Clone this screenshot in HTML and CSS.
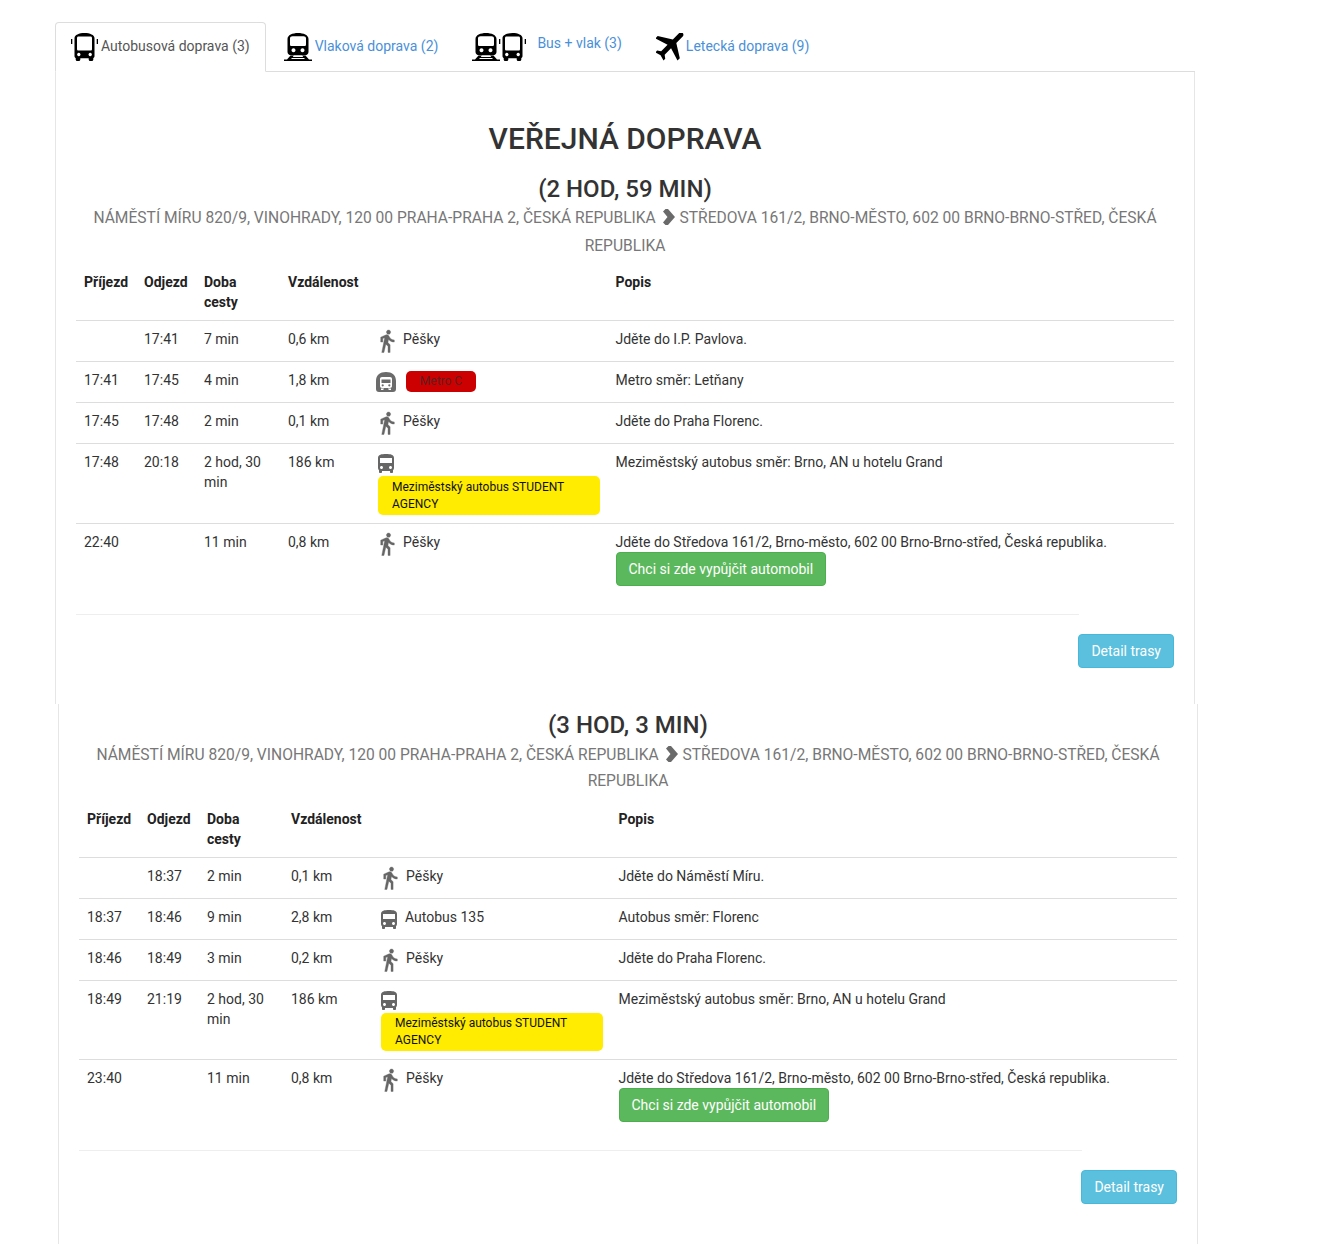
FILE: index.html
```html
<!DOCTYPE html>
<html lang="cs">
<head>
<meta charset="utf-8">
<title>Veřejná doprava</title>
<link rel="stylesheet" href="styles.css">
</head>
<body>
<svg class="defs" width="0" height="0" aria-hidden="true">
  <symbol id="walk" viewBox="5.500 .5 14 23"><path stroke-width=".35" d="M13.5 5.500c1.100 0 2-.9 2-2s-.9-2-2-2-2 .9-2 2 .9 2 2 2zM9.800 8.900L7 23h2.100l1.800-8 2.100 2v6h2v-7.500l-2.100-2 .6-3C14.800 12 16.800 13 19 13v-2c-1.900 0-3.500-1-4.300-2.400l-1-1.600c-.4-.6-1-1-1.700-1-.3 0-.5.1-.8.1L6 8.300V13h2V9.600l1.800-.7"/></symbol>
  <symbol id="bus" viewBox="4 2 16 19"><path d="M4 16c0 .88.39 1.67 1 2.220V20c0 .55.45 1 1 1h1c.55 0 1-.45 1-1v-1h8v1c0 .55.45 1 1 1h1c.55 0 1-.45 1-1v-1.780c.61-.55 1-1.340 1-2.220V6c0-3.500-3.580-4-8-4s-8 .5-8 4v10zm3.500 1c-.83 0-1.500-.67-1.500-1.500S6.670 14 7.500 14s1.500.67 1.500 1.500S8.330 17 7.500 17zm9 0c-.83 0-1.500-.67-1.500-1.500s.67-1.500 1.500-1.500 1.500.67 1.500 1.500-.67 1.500-1.500 1.500zm1.500-6H6V6h12v5z"/></symbol>
  <symbol id="metro" viewBox="0 0 20 20"><path fill-rule="evenodd" d="M3 20a3 3 0 0 1-3-3V9C0 3 4 0 10 0s10 3 10 9v8a3 3 0 0 1-3 3zM6 5C4.800 5 4 5.800 4 7v7c0 1.200.8 2 2 2h8c1.200 0 2-.8 2-2V7c0-1.200-.8-2-2-2zM5.500 7.500h9V11h-9zM6.700 12.200a1.100 1.100 0 1 0 .01 0zM13.300 12.200a1.100 1.100 0 1 0 .01 0zM5 16.500h3l-.8 1.500H5zM12 16.500h3V18h-2.200z"/></symbol>
  <symbol id="tabbus" viewBox="0 0 27 28"><path fill-rule="evenodd" d="M3.500 5c0-3 4.500-5 10-5s10 2 10 5v18c0 1-.5 1.700-1.200 2v1.500c0 .9-.6 1.500-1.500 1.500h-1.600c-.9 0-1.500-.6-1.500-1.500V25.300H9.300v1.200c0 .9-.6 1.500-1.500 1.500H6.200c-.9 0-1.500-.6-1.500-1.500V25C4 24.700 3.500 24 3.500 23zM7.500 3.500c-1 0-1.500.6-1.500 1.500v11c0 1 .5 1.500 1.500 1.500h12c1 0 1.500-.5 1.500-1.500V5c0-.9-.5-1.500-1.500-1.500zM7.800 19.800a1.700 1.700 0 1 0 .01 0zM19.200 19.800a1.700 1.700 0 1 0 .01 0z"/><path d="M0 6h1.300v5H0zM25.700 6H27v5h-1.300z"/></symbol>
  <symbol id="train" viewBox="0 0 28 28"><path fill-rule="evenodd" d="M3.500 6c0-4 5-6 10.500-6s10.500 2 10.500 6v13c0 1.800-1.500 3.200-3.500 3.200H7c-2 0-3.500-1.400-3.500-3.200zM8.500 3.200c-1.500 0-2.500.7-2.500 2v6.300c0 1 .7 1.500 1.500 1.500h13c.8 0 1.500-.5 1.500-1.500V5.200c0-1.300-1-2-2.500-2zM9.500 15.300a2 2 0 1 0 .01 0zM18.500 15.300a2 2 0 1 0 .01 0z"/><path d="M6.500 22.500h3.300L8.800 24h10.400l-1-1.500h3.300L25 26.500h3V28H0v-1.500h3zM7.800 25l-.6 1h13.600l-.6-1z"/></symbol>
  <symbol id="plane" viewBox="2.500 4.500 17 17"><path transform="rotate(45 12 12)" d="M21 16v-2l-8-5V3.500c0-.83-.67-1.500-1.500-1.500S10 2.670 10 3.500V9l-8 5v2l8-2.500V19l-2 1.500V22l3.500-1 3.500 1v-1.500L13 19v-5.500l8 2.500z"/></symbol>
</svg>

<nav class="tabs">
  <a class="tab tab-active"><svg class="ti ti-bus"><use href="#tabbus"/></svg><span class="tab-label">Autobusová doprava (3)</span></a>
  <a class="tab"><svg class="ti ti-train"><use href="#train"/></svg><span class="tab-label">Vlaková doprava (2)</span></a>
  <a class="tab"><svg class="ti ti-train ti-tight"><use href="#train"/></svg><svg class="ti ti-bus ti-tail"><use href="#tabbus"/></svg><span class="tab-label raised">Bus + vlak (3)</span></a>
  <a class="tab"><svg class="ti ti-plane"><use href="#plane"/></svg><span class="tab-label">Letecká doprava (9)</span></a>
</nav>

<section class="panel panel-first">
  <h2 class="title">VEŘEJNÁ DOPRAVA</h2>
  <h3 class="duration">(2 HOD, 59 MIN)</h3>
  <p class="route route-first">NÁMĚSTÍ MÍRU 820/9, VINOHRADY, 120 00 PRAHA-PRAHA 2, ČESKÁ REPUBLIKA <svg class="chev" viewBox="0 0 12 16"><path d="M2.500 0H5l7 8-7 8H2.500L0 13.500 4.500 8 0 2.500z"/></svg> STŘEDOVA 161/2, BRNO-MĚSTO, 602 00 BRNO-BRNO-STŘED, ČESKÁ REPUBLIKA</p>
  <table class="plan">
    <colgroup><col class="c1"><col class="c2"><col class="c3"><col class="c4"><col class="c5"><col></colgroup>
    <thead><tr><th>Příjezd</th><th>Odjezd</th><th>Doba cesty</th><th>Vzdálenost</th><th></th><th>Popis</th></tr></thead>
    <tbody>
      <tr><td></td><td>17:41</td><td>7 min</td><td>0,6 km</td><td><svg class="walk"><use href="#walk"/></svg>Pěšky</td><td>Jděte do I.P. Pavlova.</td></tr>
      <tr><td>17:41</td><td>17:45</td><td>4 min</td><td>1,8 km</td><td><svg class="metro"><use href="#metro"/></svg><span class="badge badge-metro">Metro C</span></td><td>Metro směr: Letňany</td></tr>
      <tr><td>17:45</td><td>17:48</td><td>2 min</td><td>0,1 km</td><td><svg class="walk"><use href="#walk"/></svg>Pěšky</td><td>Jděte do Praha Florenc.</td></tr>
      <tr><td>17:48</td><td>20:18</td><td>2 hod, 30 min</td><td>186 km</td><td><svg class="bus bus-block"><use href="#bus"/></svg><span class="badge badge-coach">Meziměstský autobus STUDENT AGENCY</span></td><td>Meziměstský autobus směr: Brno, AN u hotelu Grand</td></tr>
      <tr><td>22:40</td><td></td><td>11 min</td><td>0,8 km</td><td><svg class="walk"><use href="#walk"/></svg>Pěšky</td><td>Jděte do Středova 161/2, Brno-město, 602 00 Brno-Brno-střed, Česká republika.<br><a class="btn btn-green">Chci si zde vypůjčit automobil</a></td></tr>
    </tbody>
  </table>
  <div class="foot"><hr class="rule"></div>
  <div class="actions"><a class="btn btn-blue">Detail trasy</a></div>
</section>

<section class="panel panel-second">
  <h3 class="duration duration-top">(3 HOD, 3 MIN)</h3>
  <p class="route">NÁMĚSTÍ MÍRU 820/9, VINOHRADY, 120 00 PRAHA-PRAHA 2, ČESKÁ REPUBLIKA <svg class="chev" viewBox="0 0 12 16"><path d="M2.500 0H5l7 8-7 8H2.500L0 13.500 4.500 8 0 2.500z"/></svg> STŘEDOVA 161/2, BRNO-MĚSTO, 602 00 BRNO-BRNO-STŘED, ČESKÁ REPUBLIKA</p>
  <table class="plan plan-second">
    <colgroup><col class="c1"><col class="c2"><col class="c3"><col class="c4"><col class="c5"><col></colgroup>
    <thead><tr><th>Příjezd</th><th>Odjezd</th><th>Doba cesty</th><th>Vzdálenost</th><th></th><th>Popis</th></tr></thead>
    <tbody>
      <tr><td></td><td>18:37</td><td>2 min</td><td>0,1 km</td><td><svg class="walk"><use href="#walk"/></svg>Pěšky</td><td>Jděte do Náměstí Míru.</td></tr>
      <tr><td>18:37</td><td>18:46</td><td>9 min</td><td>2,8 km</td><td><svg class="bus"><use href="#bus"/></svg>Autobus 135</td><td>Autobus směr: Florenc</td></tr>
      <tr><td>18:46</td><td>18:49</td><td>3 min</td><td>0,2 km</td><td><svg class="walk"><use href="#walk"/></svg>Pěšky</td><td>Jděte do Praha Florenc.</td></tr>
      <tr><td>18:49</td><td>21:19</td><td>2 hod, 30 min</td><td>186 km</td><td><svg class="bus bus-block"><use href="#bus"/></svg><span class="badge badge-coach">Meziměstský autobus STUDENT AGENCY</span></td><td>Meziměstský autobus směr: Brno, AN u hotelu Grand</td></tr>
      <tr><td>23:40</td><td></td><td>11 min</td><td>0,8 km</td><td><svg class="walk"><use href="#walk"/></svg>Pěšky</td><td>Jděte do Středova 161/2, Brno-město, 602 00 Brno-Brno-střed, Česká republika.<br><a class="btn btn-green">Chci si zde vypůjčit automobil</a></td></tr>
    </tbody>
  </table>
  <div class="foot"><hr class="rule"></div>
  <div class="actions"><a class="btn btn-blue">Detail trasy</a></div>
</section>
</body>
</html>
```
FILE: styles.css
```css
* { box-sizing: border-box; }
html, body { margin: 0; padding: 0; }
body {
  background: #fff;
  color: #333;
  font-family: Roboto, "Liberation Sans", sans-serif;
  font-size: 14px;
  line-height: 20px;
  overflow: hidden;
  height: 1244px;
}
.defs { position: absolute; }

.tabs {
  display: flex;
  width: 1140px;
  height: 50px;
  margin: 22px 0 0 55px;
  border-bottom: 1px solid #ddd;
}
.tab {
  display: flex;
  align-items: center;
  height: 50px;
  margin-right: 2px;
  padding: 0 15px;
  border: 1px solid transparent;
  border-radius: 4px 4px 0 0;
  color: #4a90d9;
}
.tab-active {
  color: #555;
  background: #fff;
  border-color: #ddd #ddd #fff;
}
.tab-label { position: relative; top: -1px; }
.raised { top: -4px; margin-left: 11px; }
.ti { display: block; flex: none; fill: #000; }
.ti-bus { width: 27px; height: 28px; margin-right: 3px; }
.ti-train { width: 28px; height: 28px; margin-right: 3px; }
.ti-plane { width: 28px; height: 28px; margin-right: 2px; }
.ti-tight { margin-right: 0; }
.ti-tail { margin-left: -1px; margin-right: 0; width: 27px; }

.panel {
  width: 1140px;
  padding: 0 20px;
  border-left: 1px solid #e6e6e6;
  border-right: 1px solid #e6e6e6;
}
.panel-first { margin-left: 55px; height: 632px; padding-top: 30px; }
.panel-second { margin-left: 58px; height: 540px; padding-top: 8px; }

.title {
  margin: 20px 0 0;
  font-size: 30px;
  line-height: 33px;
  font-weight: 500;
  text-align: center;
}
.duration {
  margin: 21px 0 0;
  font-size: 24px;
  line-height: 26px;
  font-weight: 500;
  text-align: center;
}
.duration-top { margin-top: 0; }
.route {
  margin: 4px 0 0;
  color: #777;
  font-size: 15.6px;
  line-height: 26px;
  text-align: center;
}
.route-first { margin-top: 2px; line-height: 28px; }
.chev { display: inline-block; width: 12px; height: 16px; margin: 0 1px 0 3px; fill: #6a6a6a; vertical-align: -2px; }

.plan {
  width: 1098px;
  margin-top: 4px;
  border-collapse: collapse;
  table-layout: fixed;
  line-height: 20px;
}
.plan-second { margin-top: 7px; }
.c1, .c2 { width: 60px; }
.c3 { width: 84px; }
.c4 { width: 90px; }
.c5 { width: 237.5px; }
.plan th, .plan td {
  padding: 8px;
  vertical-align: top;
  text-align: left;
}
.plan th { font-weight: 700; color: #222; border-bottom: 1px solid #ddd; }
.plan tbody tr + tr td { border-top: 1px solid #ddd; }
.plan td { height: 41px; }

.walk {
  width: 15px;
  height: 24px;
  margin: 0 8px 0 2px;
  fill: #666;
  stroke: #666;
  vertical-align: -9px;
}
.bus {
  width: 16px;
  height: 19px;
  margin: 0 8px 0 0;
  fill: #666;
  vertical-align: -7px;
}
.plan td .bus-block { display: block; margin: 2px 0 3px; }
.metro {
  width: 20px;
  height: 20px;
  margin: 0 10px 0 -2px;
  fill: #6b6b6b;
  vertical-align: -7px;
}
.badge {
  display: inline-block;
  border-radius: 5px;
  font-size: 12px;
  line-height: 17px;
}
.badge-metro {
  width: 70px;
  padding: 2px 0;
  background: #cc0000;
  color: #5e1f1f;
  text-align: center;
  vertical-align: 0;
}
.badge-coach {
  display: block;
  padding: 3px 14px 2px;
  background: #ffec00;
  color: #111;
}
.plan-second .badge-coach { padding-top: 2px; }

.btn {
  display: inline-block;
  height: 34px;
  padding: 6px 12px;
  border: 1px solid transparent;
  border-radius: 4px;
  color: #fff;
  font-size: 14px;
  line-height: 20px;
  white-space: nowrap;
}
.btn-green { width: 210px; background: #5cb85c; border-color: #4cae4c; }
.btn-blue { background: #5bc0de; border-color: #46b8da; }

.foot { width: 1003px; }
.rule { margin: 20px 0 19px; border: 0; border-top: 1px solid #eee; }
.actions { display: flex; justify-content: flex-end; }
```
